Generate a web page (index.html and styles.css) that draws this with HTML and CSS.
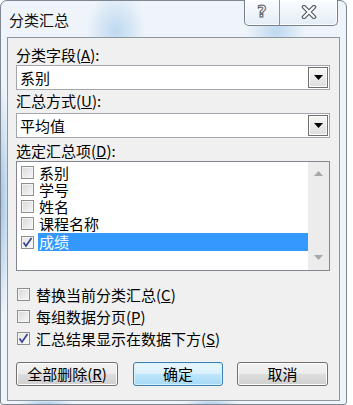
FILE: index.html
```html
<!DOCTYPE html>
<html lang="zh-CN">
<head>
  <meta charset="UTF-8">
  <title>分类汇总</title>
  <link rel="stylesheet" href="styles.css">
</head>
<body>

  <div class="window">
    <div class="titlebar">
      <span class="title">分类汇总</span>
      <div class="caption-btns">
        <div class="cap help">?</div>
        <div class="cap close">
          <svg width="16" height="14" viewBox="0 0 16 14">
            <path d="M3 2 L13 12 M13 2 L3 12" stroke="#5a5f66" stroke-width="4.5" stroke-linecap="round"/>
            <path d="M3 2 L13 12 M13 2 L3 12" stroke="#fff" stroke-width="2" stroke-linecap="round"/>
          </svg>
        </div>
      </div>
    </div>

    <div class="client">
      <div class="label">分类字段(<u>A</u>):</div>
      <div class="combo">
        <span class="value">系别</span>
        <span class="drop"><svg width="9" height="5" viewBox="0 0 9 5"><path d="M0 0 H9 L4.5 5 Z" fill="#000"/></svg></span>
      </div>

      <div class="label second">汇总方式(<u>U</u>):</div>
      <div class="combo">
        <span class="value">平均值</span>
        <span class="drop"><svg width="9" height="5" viewBox="0 0 9 5"><path d="M0 0 H9 L4.5 5 Z" fill="#000"/></svg></span>
      </div>

      <div class="label third">选定汇总项(<u>D</u>):</div>
      <div class="listbox">
        <div class="items">
          <div class="item"><span class="check"></span><span class="text">系别</span></div>
          <div class="item"><span class="check"></span><span class="text">学号</span></div>
          <div class="item"><span class="check"></span><span class="text">姓名</span></div>
          <div class="item"><span class="check"></span><span class="text">课程名称</span></div>
          <div class="item selected">
            <span class="check checked"><svg width="11" height="11" viewBox="0 0 11 11"><path d="M1.5 5.5 L4 9 L9.5 1" stroke="#3b4a8f" stroke-width="1.8" fill="none"/></svg></span>
            <span class="text">成绩</span>
          </div>
        </div>
        <div class="scrollbar">
          <svg width="9" height="5" viewBox="0 0 9 5"><path d="M0 5 H9 L4.5 0 Z" fill="#a8a8a8"/></svg>
          <svg width="9" height="5" viewBox="0 0 9 5"><path d="M0 0 H9 L4.5 5 Z" fill="#a8a8a8"/></svg>
        </div>
      </div>

      <div class="options">
        <div class="option"><span class="check"></span>替换当前分类汇总(<u>C</u>)</div>
        <div class="option"><span class="check"></span>每组数据分页(<u>P</u>)</div>
        <div class="option">
          <span class="check checked"><svg width="11" height="11" viewBox="0 0 11 11"><path d="M1.5 5.5 L4 9 L9.5 1" stroke="#3b4a8f" stroke-width="1.8" fill="none"/></svg></span>汇总结果显示在数据下方(<u>S</u>)
        </div>
      </div>

      <div class="buttons">
        <div class="btn remove">全部删除(<u>R</u>)</div>
        <div class="btn ok">确定</div>
        <div class="btn cancel">取消</div>
      </div>
    </div>
  </div>

</body>
</html>
```

FILE: styles.css
```css
body {
  margin: 0;
  background-color: #fff;
  font-family: "Noto Sans CJK SC", "Noto Sans", sans-serif;
  font-size: 15px;
  color: #000;
}

u {
  text-decoration: underline;
  text-underline-offset: 1px;
}

.window {
  width: 345px;
  height: 403px;
  border: 1px solid #7d8691;
  border-radius: 7px 7px 3px 3px;
  display: flex;
  flex-direction: column;
  background-color: #eef4fa;
  background-image:
    radial-gradient(ellipse 30px 40px at 115px 30px, rgba(170, 205, 235, 0.7), transparent),
    radial-gradient(ellipse 30px 30px at 275px 30px, rgba(170, 205, 235, 0.7), transparent),
    radial-gradient(ellipse 10px 120px at 0px 200px, rgba(140, 185, 225, 0.8), transparent),
    radial-gradient(ellipse 30px 6px at 45px 404px, rgba(140, 185, 225, 0.8), transparent),
    radial-gradient(ellipse 30px 6px at 210px 404px, rgba(140, 185, 225, 0.8), transparent);
}

.titlebar {
  height: 36px;
  display: flex;
  align-items: flex-start;
  padding-left: 8px;
}

.title {
  margin-top: 10px;
  line-height: 18px;
  font-size: 15px;
  color: #111;
}

.caption-btns {
  margin-left: auto;
  margin-right: 8px;
  margin-top: -1px;
  display: flex;
  height: 25px;
  border: 1px solid #76808c;
  border-top: none;
  border-radius: 0 0 5px 5px;
  background: linear-gradient(#fbfdff, #e4edf5);
  box-shadow: inset 0 0 0 1px rgba(255, 255, 255, 0.8);
}

.cap {
  display: flex;
  align-items: center;
  justify-content: center;
}

.help {
  width: 34px;
  font-weight: bold;
  font-size: 16px;
  color: #fff;
  -webkit-text-stroke: 1px #555b63;
  font-family: "DejaVu Sans", sans-serif;
  padding-bottom: 3px;
}

.close {
  width: 57px;
  border-left: 1px solid #8a949f;
  padding-bottom: 2px;
}

.client {
  flex: 1;
  margin: 0 6px 3px 6px;
  border: 1px solid #8d959e;
  background-color: #f0f0f0;
  padding: 6px 9px 0 8px;
}

.label {
  height: 21px;
  line-height: 21px;
}

.label.second {
  margin-top: 0;
}

.label.third {
  margin-top: 2px;
}

.combo {
  height: 25px;
  box-sizing: border-box;
  border: 1px solid #a3a7ad;
  background-color: #fff;
  display: flex;
  align-items: stretch;
}

.combo + .label.second {
  margin-top: 0;
}

.combo:nth-of-type(4) {
  margin-top: 2px;
}

.value {
  flex: 1;
  padding-left: 3px;
  line-height: 23px;
}

.drop {
  width: 18px;
  margin: 1px 1px 1px 0;
  border: 1px solid #6f6f6f;
  background: linear-gradient(#f7f7f7, #dedede);
  box-shadow: inset 0 0 0 1px #fdfdfd;
  display: flex;
  align-items: center;
  justify-content: center;
}

.listbox {
  height: 110px;
  box-sizing: border-box;
  border: 1px solid #828790;
  background-color: #fff;
  display: flex;
}

.items {
  flex: 1;
  padding: 2px 0 0 4px;
}

.item {
  display: flex;
  align-items: center;
  height: 17px;
}

.item .text {
  padding: 0 2px 0 1px;
  line-height: 17px;
}

.item.selected {
  height: 18px;
  margin-top: 1px;
}

.item.selected .text {
  flex: 1;
  background-color: #3399ff;
  color: #fff;
  line-height: 18px;
}

.check {
  width: 11px;
  height: 11px;
  border: 1px solid #8e8f8f;
  background: linear-gradient(135deg, #d8d8d8, #f8f8f8);
  box-shadow: inset 0 0 0 1px #f4f4f4;
  margin-right: 4px;
  display: flex;
  align-items: center;
  justify-content: center;
  flex-shrink: 0;
}

.check.checked {
  background: linear-gradient(135deg, #e4e4e4, #fbfbfb);
}

.scrollbar {
  width: 21px;
  background-color: #ececec;
  display: flex;
  flex-direction: column;
  justify-content: space-between;
  align-items: center;
  padding: 9px 0 10px;
}

.options {
  margin-top: 12px;
}

.option {
  display: flex;
  align-items: center;
  height: 22px;
  padding-left: 1px;
}

.option .check {
  margin-right: 6px;
}

.buttons {
  display: flex;
  margin-top: 13px;
}

.btn {
  height: 24px;
  box-sizing: border-box;
  border: 1px solid #707070;
  border-radius: 3px;
  background: linear-gradient(#f2f2f2 0%, #ebebeb 50%, #dddddd 51%, #cfcfcf 100%);
  box-shadow: inset 0 0 0 1px #fcfcfc;
  display: flex;
  align-items: center;
  justify-content: center;
  line-height: 22px;
}

.remove {
  width: 102px;
}

.ok {
  width: 90px;
  margin-left: 15px;
  border-color: #3c7fb1;
  background: linear-gradient(#eaf6fd 0%, #d9f0fc 50%, #bee6fd 51%, #a7d9f5 100%);
  box-shadow: inset 0 0 0 1px #d6f0fd;
}

.cancel {
  width: 91px;
  margin-left: 14px;
}
```
